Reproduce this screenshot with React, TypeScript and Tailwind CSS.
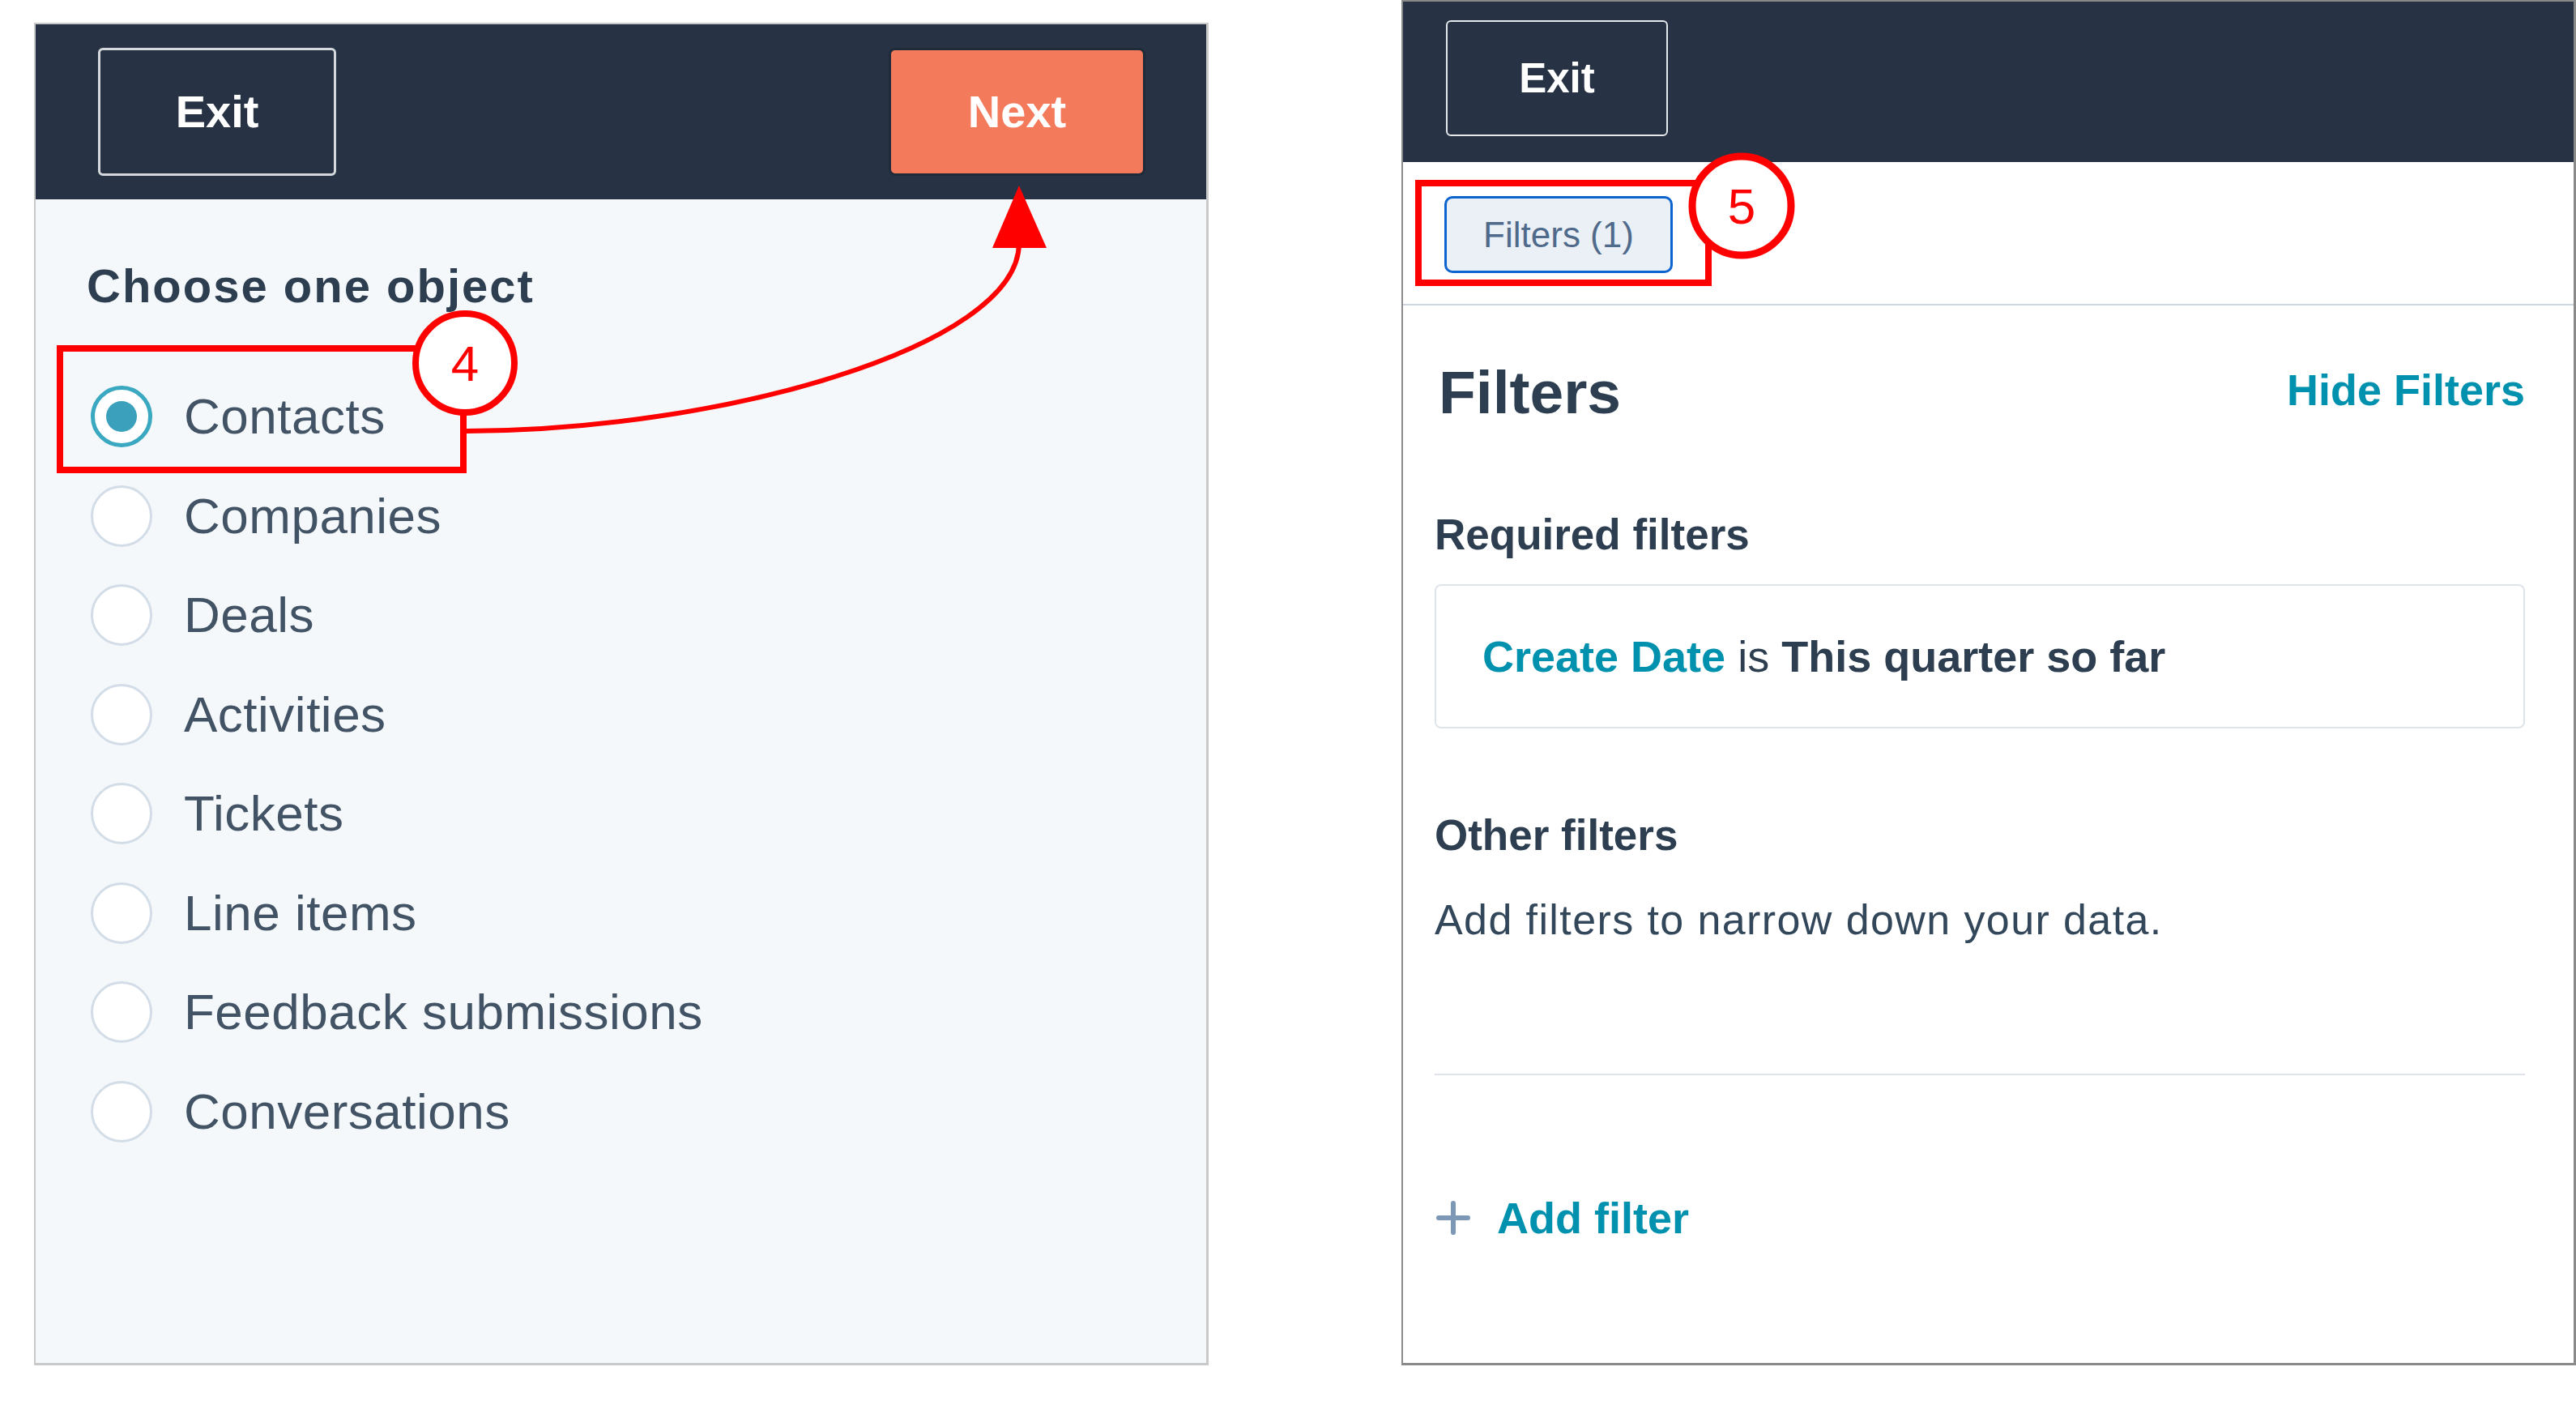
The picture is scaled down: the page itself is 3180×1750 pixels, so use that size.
import React from "react";

const objects = [
  "Contacts",
  "Companies",
  "Deals",
  "Activities",
  "Tickets",
  "Line items",
  "Feedback submissions",
  "Conversations",
];

function Radio({ checked }: { checked: boolean }) {
  if (checked) {
    return (
      <div className="w-[76px] h-[76px] rounded-full border-[5px] border-[#3aa8c0] bg-white flex items-center justify-center shrink-0">
        <div className="w-[38px] h-[38px] rounded-full bg-[#3aa0bb]" />
      </div>
    );
  }
  return <div className="w-[76px] h-[76px] rounded-full border-[3px] border-[#d3dde8] bg-white shrink-0" />;
}

export default function App() {
  return (
    <div className="relative w-[3180px] h-[1750px] bg-white flex items-start font-['Liberation_Sans',Arial,sans-serif]">
      {/* Left panel */}
      <div className="ml-[42px] mt-[28px] w-[1450px] h-[1657px] border-2 border-r-[3px] border-b-[3px] border-[#c9c9c9] bg-[#f5f8fa] flex flex-col">
        <div className="h-[216px] bg-[#273344] flex items-center justify-between pl-[77px] pr-[75px] shrink-0">
          <div className="w-[294px] h-[158px] border-[3px] border-[#d5d9de] rounded-[6px] flex items-center justify-center text-white text-[56px] leading-[56px] font-bold">
            Exit
          </div>
          <div className="w-[317px] h-[158px] rounded-[8px] bg-[#f47a5c] border-[3px] border-[#1f2b39] flex items-center justify-center text-white text-[56px] leading-[56px] font-bold">
            Next
          </div>
        </div>
        <div className="pl-[63px] pt-[78px] flex flex-col">
          <div className="text-[58px] leading-[58px] font-bold tracking-[2px] text-[#2d3e50]">Choose one object</div>
          <div className="mt-[71px] pl-[5px] flex flex-col">
            {objects.map((o, i) => (
              <div key={o} className="h-[122.5px] flex items-center gap-[39px]">
                <Radio checked={i === 0} />
                <span className="text-[62px] leading-[62px] tracking-[0.5px] text-[#425366]">{o}</span>
              </div>
            ))}
          </div>
        </div>
      </div>

      {/* Right panel */}
      <div className="ml-[238px] w-[1450px] h-[1685px] border-2 border-r-[3px] border-b-[3px] border-[#8a8a8a] bg-white flex flex-col">
        <div className="h-[198px] bg-[#273344] pl-[53px] pt-[23px] shrink-0">
          <div className="w-[274px] h-[143px] border-2 border-[#e5e8eb] rounded-[6px] flex items-center justify-center text-white text-[51px] leading-[51px] font-bold">
            Exit
          </div>
        </div>
        <div className="h-[177px] border-b-2 border-[#cbd6e2] pl-[51px] pt-[42px] shrink-0">
          <div className="w-[282px] h-[95px] border-[3px] border-[#0b63d0] bg-[#eaf0f6] rounded-[10px] flex items-center justify-center text-[44px] leading-[44px] text-[#4f6a8b]">
            Filters (1)
          </div>
        </div>
        <div className="pl-[39px] pr-[60px] flex flex-col">
          <div className="mt-[70px] flex justify-between items-start">
            <div className="ml-[5px] text-[75px] leading-[75px] font-bold text-[#2d3e50]">Filters</div>
            <div className="mt-[7px] text-[54px] leading-[54px] font-bold text-[#0091ae]">Hide Filters</div>
          </div>
          <div className="mt-[112px] text-[53px] leading-[52px] font-bold text-[#2d3e50]">Required filters</div>
          <div className="mt-[35px] h-[178px] border-2 border-[#dfe3eb] rounded-[8px] flex items-center pl-[57px] text-[54px] leading-[54px] text-[#2d3e50]">
            <span className="font-bold text-[#0091ae]">Create Date</span>
            <span className="whitespace-pre"> is </span>
            <span className="font-bold">This quarter so far</span>
          </div>
          <div className="mt-[106px] text-[53px] leading-[52px] font-bold text-[#2d3e50]">Other filters</div>
          <div className="mt-[52px] text-[52px] leading-[52px] tracking-[1.4px] text-[#33475b]">
            Add filters to narrow down your data.
          </div>
          <div className="mt-[164px] h-[2px] bg-[#dfe3eb]" />
          <div className="mt-[149px] h-[54px] flex items-center gap-[33px]">
            <svg width="42" height="42" viewBox="0 0 42 42" className="ml-[2px]">
              <path d="M21 3 V39 M3 21 H39" stroke="#7c98b6" strokeWidth="6" strokeLinecap="round" />
            </svg>
            <span className="text-[54px] leading-[54px] font-bold text-[#0091ae]">Add filter</span>
          </div>
        </div>
      </div>

      {/* Annotations overlay */}
      <svg
        className="absolute inset-0 pointer-events-none"
        width="3180"
        height="1750"
        viewBox="0 0 3180 1750"
      >
        <rect x="74" y="430" width="498" height="150" fill="none" stroke="#ff0000" strokeWidth="8" />
        <path d="M576 532 C 880 532, 1258 430, 1258 300" fill="none" stroke="#ff0000" strokeWidth="6" />
        <polygon points="1258,229 1225,306 1292,306" fill="#ff0000" />
        <circle cx="574" cy="448" r="61" fill="#ffffff" stroke="#ff0000" strokeWidth="8" />
        <text x="574" y="470" textAnchor="middle" fontSize="62" fill="#ff0000" fontFamily="Liberation Sans, Arial, sans-serif">4</text>

        <rect x="1751" y="226" width="358" height="123" fill="none" stroke="#ff0000" strokeWidth="8" />
        <circle cx="2150" cy="254" r="61" fill="#ffffff" stroke="#ff0000" strokeWidth="9" />
        <text x="2150" y="276" textAnchor="middle" fontSize="62" fill="#ff0000" fontFamily="Liberation Sans, Arial, sans-serif">5</text>
      </svg>
    </div>
  );
}
